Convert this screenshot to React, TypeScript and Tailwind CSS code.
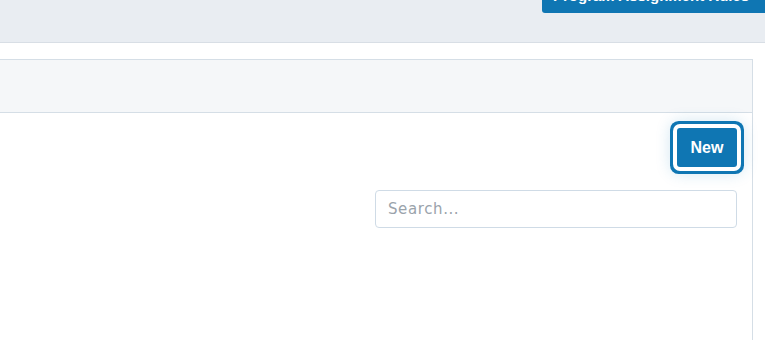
export default function App() {
  return (
    <div className="min-h-screen bg-white font-['Liberation_Sans',Arial,sans-serif] overflow-hidden">
      <header className="h-[43px] bg-[#e9edf2] border-b border-[#d8dee5] flex justify-end">
        <button className="mt-[-22px] h-[35px] w-[225px] ml-auto -mr-[2px] rounded-b-[3px] bg-[#0f76b3] text-white font-bold text-[15px] pl-[11px] text-left leading-[35px] whitespace-nowrap">
          Program Assignment Rules
        </button>
      </header>

      <div className="pt-4 pr-3 -ml-5">
        <section className="border border-[#d5dee6] min-h-[320px]">
          <div className="h-[53px] bg-[#f5f7f9] border-b border-[#d5dee6]" />
          <div className="flex flex-col items-end pt-[15px] pr-[15px]">
            <button className="w-[60px] h-[39px] rounded-[3px] bg-[#0f76b3] text-white font-bold text-[16px] ring-[3px] ring-[#0f76b3] ring-offset-4 ring-offset-white shadow-[0_0_16px_6px_rgba(15,118,179,0.2)]">
              New
            </button>
            <input
              type="text"
              placeholder="Search..."
              className="mt-[23px] w-[362px] h-[38px] rounded-[4px] border border-[#cfdbe6] px-3 text-[15px] font-['DejaVu_Sans',sans-serif] tracking-[0.6px] text-[#555] placeholder:text-[#9aa3ab] outline-none"
            />
          </div>
        </section>
      </div>
    </div>
  );
}
